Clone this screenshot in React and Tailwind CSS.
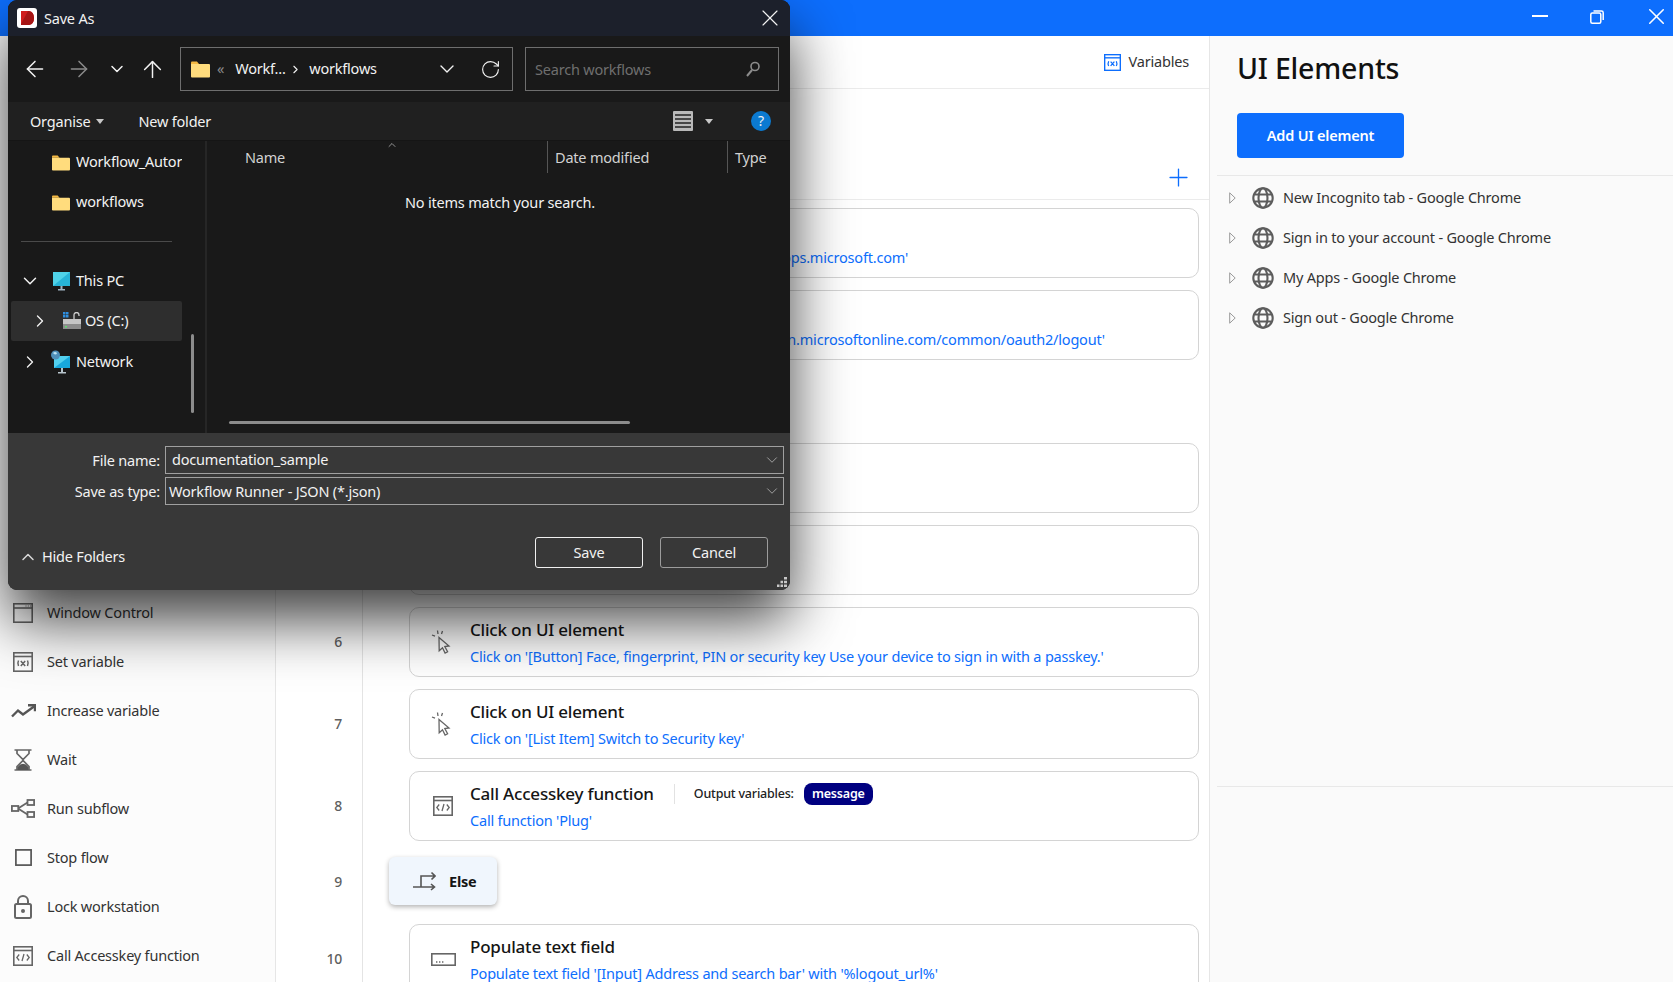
import { ArrowLeft, ArrowRight, ArrowUp, ChevronDown, ChevronRight, ChevronUp, Plus, RotateCw, X } from 'lucide-react'

const tools = [
  ['Window Control', WindowIcon, 'h-[20px] w-[20px]'],
  ['Set variable', VarIcon, 'h-[20px] w-[20px]'],
  ['Increase variable', TrendIcon, 'h-[14px] w-[25px]'],
  ['Wait', WaitIcon, 'h-[22px] w-[18px]'],
  ['Run subflow', SubflowIcon, 'h-[19px] w-[24px]'],
  ['Stop flow', StopIcon, 'h-[17px] w-[17px]'],
  ['Lock workstation', LockIcon, 'h-[24px] w-[18px]'],
  ['Call Accesskey function', CodeIcon, 'h-[20px] w-[20px]'],
]

const elements = [
  'New Incognito tab - Google Chrome',
  'Sign in to your account - Google Chrome',
  'My Apps - Google Chrome',
  'Sign out - Google Chrome',
]

function WindowIcon({ className }) {
  return (
    <svg className={className} viewBox="0 0 20 20" fill="none" stroke="#666" strokeWidth="1.600">
      <rect x=".8" y=".8" width="18.400" height="18.400" />
      <path d="M1 5h18" />
      <path d="M12.500 3h1M14.800 3h1M17 3h1" strokeWidth="1" />
    </svg>
  )
}

function VarIcon({ className, color = '#666' }) {
  return (
    <svg className={className} viewBox="0 0 20 20" fill="none" stroke={color} strokeWidth="1.600">
      <rect x=".8" y=".8" width="18.400" height="18.400" />
      <path d="M1 4.500h18" />
      <path d="M5.500 8.500q-1.300 2.700 0 5.500M14.500 8.500q1.300 2.700 0 5.500M7.800 9l4.400 5M12.200 9l-4.400 5" strokeWidth="1.500" />
    </svg>
  )
}

function CodeIcon({ className }) {
  return (
    <svg className={className} viewBox="0 0 20 20" fill="none" stroke="#666" strokeWidth="1.600">
      <rect x=".8" y=".8" width="18.400" height="18.400" />
      <path d="M1 4.500h18" />
      <path d="M6.200 8.500l-2.400 3 2.400 3M13.800 8.500l2.400 3-2.400 3M11 8l-2 7" strokeWidth="1.300" />
    </svg>
  )
}

function TrendIcon({ className }) {
  return (
    <svg className={className} viewBox="0 0 25 14" fill="none" stroke="#555" strokeWidth="2.400">
      <path d="M1 12.500l6-6 5 4 11-8" />
      <path d="M17 1.300h7v6" />
    </svg>
  )
}

function WaitIcon({ className }) {
  return (
    <svg className={className} viewBox="0 0 18 22" fill="none" stroke="#666" strokeWidth="1.700">
      <path d="M.5 1h17M.5 21h17M3 1v3.500L9 10.500l6-6V1M3 21v-3.500l6-6 6 6V21" />
      <path d="M3.500 21v-3q5.500-6.500 11 0v3z" fill="#555" stroke="none" />
    </svg>
  )
}

function SubflowIcon({ className }) {
  return (
    <svg className={className} viewBox="0 0 24 19" fill="none" stroke="#666" strokeWidth="1.800">
      <rect x=".9" y="7" width="6.400" height="5" />
      <rect x="16.500" y="1" width="6.600" height="5" />
      <rect x="16.500" y="13" width="6.600" height="5" />
      <path d="M7 9.500L16.500 3.500M7 9.500l9.500 6" />
    </svg>
  )
}

function StopIcon({ className }) {
  return (
    <svg className={className} viewBox="0 0 17 17" fill="none" stroke="#555" strokeWidth="1.700">
      <rect x=".9" y=".9" width="15.200" height="15.200" />
    </svg>
  )
}

function LockIcon({ className }) {
  return (
    <svg className={className} viewBox="0 0 18 24" fill="none" stroke="#666" strokeWidth="2">
      <rect x="1" y="9" width="16" height="14" rx="1.500" />
      <path d="M4 9V6a5 5 0 0 1 10 0v3" />
      <circle cx="9" cy="16" r="2" fill="#666" stroke="none" />
    </svg>
  )
}

function ClickIcon({ className }) {
  return (
    <svg className={className} viewBox="0 0 20 26" fill="none" stroke="#666" strokeWidth="1.300">
      <path d="M8 8.500l10 8.500-4.200.6 2.800 5.200-2.500 1.300-2.600-5.300-3.300 3z" />
      <path d="M6.500 1.500l.5 3.500M11.500 2l-1 3M1 6l3 1.200" />
    </svg>
  )
}

function ElseIcon({ className }) {
  return (
    <svg className={className} viewBox="0 0 23 21" fill="none" stroke="#555" strokeWidth="1.600">
      <path d="M0 16h21M18 13l3.500 3-3.500 3" />
      <path d="M8 16V5h14M18.500 1.500L22 5l-3.500 3.500" />
    </svg>
  )
}

function InputIcon({ className }) {
  return (
    <svg className={className} viewBox="0 0 25 13" fill="none" stroke="#666" strokeWidth="1.600">
      <rect x=".8" y=".8" width="23.400" height="11.400" />
      <path d="M5 9h1.400M8 9h1.400M11 9h1.400" />
    </svg>
  )
}

function GlobeIcon({ className }) {
  return (
    <svg className={className} viewBox="0 0 22 22" fill="none" stroke="#5c5c5c" strokeWidth="2.100">
      <circle cx="11" cy="11" r="9.700" />
      <ellipse cx="11" cy="11" rx="4.500" ry="9.700" />
      <path d="M2.200 7.500h17.600M2.200 14.500h17.600" />
    </svg>
  )
}

function FolderIcon({ className }) {
  return (
    <svg className={className} viewBox="0 0 19 19">
      <path d="M0 3q0-1 1-1h5l2 2.500H0z" fill="#f5b942" />
      <path d="M0 4.500h18q1 0 1 1V17q0 1-1 1H1q-1 0-1-1z" fill="#ffdc7d" />
    </svg>
  )
}

function AppLogo() {
  return (
    <svg className="h-5 w-5" viewBox="0 0 20 20">
      <rect width="20" height="20" rx="3" fill="#fff" />
      <path d="M4 3h8q5 1 5 7t-5 7H4z" fill="#d01c1c" />
      <path d="M4 16L11 3h1q5 1 5 7t-5 7H4z" fill="#a51414" />
    </svg>
  )
}

function PcIcon() {
  return (
    <svg className="h-[19px] w-[19px]" viewBox="0 0 19 19">
      <rect x="1" y="0" width="17" height="14" fill="#27b4d8" />
      <path d="M1 0h17L1 14z" fill="#4fd2e8" />
      <path d="M6 17h7v1.500H6zM8.500 14h2v3h-2z" fill="#9fb4c4" />
    </svg>
  )
}

function DriveIcon() {
  return (
    <svg className="h-[19px] w-5" viewBox="0 0 20 19">
      <path d="M1 0h2.500v2.500H1zM4 0h2.500v2.500H4zM1 3h2.500v2.500H1zM4 3h2.500v2.500H4z" fill="#2f8fe0" />
      <path d="M12 7V3a2.500 2.500 0 0 1 5 0v1" fill="none" stroke="#cfcfcf" strokeWidth="1.300" />
      <rect x="1" y="7" width="18" height="5" fill="#c6c6c6" />
      <rect x="1" y="12" width="18" height="5" fill="#8d8d8d" />
      <path d="M3 14h2v1.500H3z" fill="#5ce06f" />
    </svg>
  )
}

function NetworkIcon() {
  return (
    <svg className="h-6 w-[21px]" viewBox="0 0 21 24">
      <rect x="4" y="6" width="16" height="12" fill="#18a8dc" />
      <path d="M4 6h16L4 18z" fill="#52d0ee" />
      <circle cx="5.500" cy="5" r="4.500" fill="#4f8fb8" />
      <path d="M3 3q2-2 4 0-1 3-4 0z" fill="#bfe4f4" />
      <path d="M11 18h2v4h-2zM8 22h8v1.500H8z" fill="#b7c4cc" />
    </svg>
  )
}

function Card({ icon, title, sub, extra }) {
  return (
    <div className="flex h-[70px] items-center rounded-[10px] border border-[#d4d4d4] bg-white">
      <div className="flex w-[60px] shrink-0 justify-center pl-[2px]">{icon}</div>
      <div className="min-w-0 flex-1">
        <div className="flex items-center">
          <span className="text-[17px] leading-[26px] font-medium text-[#151515]">{title}</span>
          {extra}
        </div>
        <div className="mt-[3px] truncate leading-[21px] text-[#0d6efd]">{sub}</div>
      </div>
    </div>
  )
}

function Step({ n, children, tall }) {
  return (
    <div className={`flex ${tall ? 'h-[71px]' : 'h-[82px]'}`}>
      <div className="flex w-[87px] shrink-0 items-center justify-end border-r border-[#e4e4e4] pr-[20px] pb-[2px] text-[14px] font-medium text-[#5f5f5f]">{n}</div>
      <div className="flex-1 pt-[6px] pr-[10px] pl-[46px]">{children}</div>
    </div>
  )
}

function BranchTag({ label }) {
  return (
    <div className="-ml-[20px] mt-[4px] flex h-[48px] w-[108px] items-center rounded-[6px] bg-[#f0f6fd] pl-[24px] shadow-[0_2px_5px_rgba(0,0,0,0.3)]">
      <ElseIcon className="h-[21px] w-[23px]" />
      <span className="ml-[13px] pt-[2px] font-bold text-[#151515]">{label}</span>
    </div>
  )
}

function SaveDialog() {
  return (
    <div className="absolute top-0 left-[8px] flex h-[590px] w-[782px] flex-col overflow-hidden rounded-[9px] bg-[#191919] text-[#f2f2f2] shadow-[0_30px_60px_rgba(0,0,0,0.75)]">
      <div className="flex h-[36px] shrink-0 items-center bg-[#1c202b] pl-[9px]">
        <AppLogo />
        <span className="ml-[7px] pt-px text-[14.500px]">Save As</span>
        <X className="mr-[6px] ml-auto h-[28px] w-[28px]" strokeWidth={1} />
      </div>

      <div className="flex h-[66px] shrink-0 items-center pl-[14px]">
        <ArrowLeft className="h-[26px] w-[26px] shrink-0" strokeWidth={1.400} />
        <ArrowRight className="ml-[18px] h-[26px] w-[26px] shrink-0 text-[#8a8a8a]" strokeWidth={1.400} />
        <ChevronDown className="ml-[15px] h-[20px] w-[20px] shrink-0" strokeWidth={1.800} />
        <ArrowUp className="ml-[12px] h-[27px] w-[27px] shrink-0" strokeWidth={1.300} />
        <div className="ml-[14px] flex h-[44px] w-[333px] shrink-0 items-center border border-[#6e6e6e] pl-[10px]">
          <FolderIcon className="h-[20px] w-[19px]" />
          <span className="ml-[7px] text-[#8a8a8a]">«</span>
          <span className="ml-[11px] w-[50px] whitespace-nowrap">Workf...</span>
          <ChevronRight className="ml-[4px] h-[13px] w-[13px]" strokeWidth={2} />
          <span className="ml-[7px]">workflows</span>
          <ChevronDown className="ml-auto h-[24px] w-[24px]" strokeWidth={1.400} />
          <RotateCw className="mr-[11px] ml-[21px] h-[21px] w-[21px]" strokeWidth={1.300} />
        </div>
        <div className="ml-[12px] flex h-[44px] w-[254px] shrink-0 items-center justify-between border border-[#6e6e6e] pr-[17px] pl-[9px] text-[#6f6f6f]">
          <span className="pt-px">Search workflows</span>
          <svg className="h-[16px] w-[16px]" viewBox="0 0 16 16" fill="none" stroke="#8c8c8c" strokeWidth="1.600">
            <circle cx="10" cy="5.500" r="4" />
            <path d="M7 9l-5 6" strokeWidth="2" />
          </svg>
        </div>
      </div>

      <div className="flex h-[38px] shrink-0 items-center bg-[#202020] pl-[22px]">
        <span className="pt-px">Organise</span>
        <span className="ml-[6px] h-0 w-0 border-x-[4px] border-t-[5px] border-x-transparent border-t-[#c8c8c8]" />
        <span className="ml-[34px] pt-px">New folder</span>
        <svg className="ml-auto h-[20px] w-[20px]" viewBox="0 0 20 20">
          <rect width="20" height="20" rx="1" fill="#b9b9b9" />
          <path d="M2 4h16M2 8h16M2 12h16M2 16h16" stroke="#222" strokeWidth="1.400" />
        </svg>
        <span className="ml-[12px] h-0 w-0 border-x-[4px] border-t-[5px] border-x-transparent border-t-[#c8c8c8]" />
        <span className="mr-[19px] ml-[38px] flex h-[20px] w-[20px] items-center justify-center rounded-full bg-[#0b7ad1] text-[14px] leading-none">?</span>
      </div>

      <div className="flex min-h-0 flex-1 border-t border-[#151515]">
        <div className="relative w-[197px] shrink-0 pt-px pl-[3px]">
          <div className="flex h-[40px] w-[171px] items-center overflow-hidden pl-[41px] whitespace-nowrap">
            <FolderIcon className="h-[19px] w-[18px] shrink-0" />
            <span className="ml-[6px]">Workflow_Autor</span>
          </div>
          <div className="flex h-[40px] w-[171px] items-center pl-[41px]">
            <FolderIcon className="h-[19px] w-[18px] shrink-0" />
            <span className="ml-[6px]">workflows</span>
          </div>
          <div className="mt-[19px] mb-[19px] ml-[10px] h-px w-[151px] bg-[#4a4a4a]" />
          <div className="flex h-[40px] w-[171px] items-center pl-[8px]">
            <ChevronDown className="h-[22px] w-[22px]" strokeWidth={1.600} />
            <span className="ml-[11px]"><PcIcon /></span>
            <span className="ml-[5px]">This PC</span>
          </div>
          <div className="flex h-[40px] w-[171px] items-center rounded-[2px] bg-[#2e2e2e] pl-[19px]">
            <ChevronRight className="h-[20px] w-[20px]" strokeWidth={1.600} />
            <span className="ml-[12px]"><DriveIcon /></span>
            <span className="ml-[3px]">OS (C:)</span>
          </div>
          <div className="flex h-[41px] w-[171px] items-center pl-[9px]">
            <ChevronRight className="h-[20px] w-[20px]" strokeWidth={1.600} />
            <span className="ml-[10px]"><NetworkIcon /></span>
            <span className="ml-[5px]">Network</span>
          </div>
          <div className="absolute top-[193px] left-[183px] h-[79px] w-[3px] rounded-full bg-[#8c8c8c]" />
        </div>
        <div className="flex min-w-0 flex-1 flex-col border-l-2 border-[#262626]">
          <div className="relative flex h-[32px] shrink-0 items-center text-[#d2d2d2]">
            <span className="w-[340px] pt-px pl-[38px]">Name</span>
            <span className="h-full w-[180px] border-l border-[#555] pt-[6px] pl-[7px]">Date modified</span>
            <span className="h-full border-l border-[#555] pt-[6px] pl-[7px]">Type</span>
            <ChevronUp className="absolute top-[-2px] left-[179px] h-[12px] w-[12px] text-[#bbb]" strokeWidth={1.500} />
          </div>
          <div className="mt-[19px] pl-[198px]">No items match your search.</div>
          <div className="mt-auto mb-[9px] ml-[22px] h-[3px] w-[401px] rounded-full bg-[#8c8c8c]" />
        </div>
      </div>

      <div className="relative h-[157px] shrink-0 bg-[#383838] pt-[13px]">
        <div className="flex h-[28px] items-center">
          <span className="w-[152px] pt-px text-right">File name:</span>
          <div className="ml-[5px] flex h-full w-[619px] items-center justify-between border border-[#a0a0a0] pr-[2px] pl-[6px]">
            <span>documentation_sample</span>
            <ChevronDown className="h-[18px] w-[18px] text-[#c0c0c0]" strokeWidth={1} />
          </div>
        </div>
        <div className="mt-[3px] flex h-[28px] items-center">
          <span className="w-[152px] pt-px text-right">Save as type:</span>
          <div className="ml-[5px] flex h-full w-[619px] items-center justify-between border border-[#a0a0a0] pr-[2px] pl-[3px]">
            <span className="pt-px">Workflow Runner - JSON (*.json)</span>
            <ChevronDown className="h-[18px] w-[18px] text-[#c0c0c0]" strokeWidth={1} />
          </div>
        </div>
        <div className="mt-[32px] flex items-start pr-[22px] pl-[10px]">
          <div className="flex items-center pt-[9px]">
            <ChevronUp className="h-[20px] w-[20px] text-[#d8d8d8]" strokeWidth={1.800} />
            <span className="ml-[4px]">Hide Folders</span>
          </div>
          <button className="ml-auto h-[31px] w-[108px] rounded-[3px] border-[1.500px] border-[#f0f0f0]" type="button">Save</button>
          <button className="ml-[17px] h-[31px] w-[108px] rounded-[3px] border border-[#9c9c9c]" type="button">Cancel</button>
        </div>
        <svg className="absolute right-[3px] bottom-[3px] h-[10px] w-[10px]" viewBox="0 0 10 10" fill="#c8c8c8">
          <path d="M7 0h3v2.500H7zM3.500 3.700h2.500v2.500H3.500zM7 3.700h3v2.500H7zM0 7.500h2.500V10H0zM3.500 7.500h2.500V10H3.500zM7 7.500h3V10H7z" />
        </svg>
      </div>
    </div>
  )
}

export default function App() {
  return (
    <div className="relative flex h-[982px] w-[1673px] flex-col overflow-hidden bg-white font-['Noto_Sans',sans-serif] text-[14.500px] tracking-[-0.2px]">
      <div className="flex h-[36px] shrink-0 items-center justify-end bg-[#0d6efd] text-white">
        <span className="mr-[42px] mb-[4px] h-[2px] w-[16px] bg-white" />
        <svg className="mr-[39px] mb-[2px] h-[14px] w-[14px]" viewBox="0 0 14 14" fill="none" stroke="#fff" strokeWidth="1.500">
          <rect x=".8" y="3" width="10" height="10.200" rx="1.500" />
          <path d="M3.500 1h8q1.700 0 1.700 1.700V10" />
        </svg>
        <X className="mr-[3px] mb-[4px] h-[27px] w-[27px]" strokeWidth={1.400} />
      </div>

      <div className="flex min-h-0 flex-1">
        <div className="w-[276px] shrink-0 overflow-hidden border-r border-[#e6e6e6] bg-[#fcfcfc] pt-[552px] text-[#333]">
          {tools.map(([label, Icon, size]) => (
            <div className="flex h-[49px] items-center" key={label}>
              <div className="flex w-[47px] shrink-0 justify-center pr-[1px]">
                <Icon className={size} />
              </div>
              <span>{label}</span>
            </div>
          ))}
        </div>

        <div className="flex w-[934px] shrink-0 flex-col overflow-hidden border-r border-[#e6e6e6]">
          <div className="flex h-[53px] shrink-0 items-center justify-end border-b border-[#ebebeb] pr-[20px] text-[#333]">
            <VarIcon className="h-[17px] w-[17px]" color="#0d6efd" />
            <span className="ml-[8px]">Variables</span>
          </div>
          <div className="flex h-[111px] shrink-0 items-end justify-end border-b border-[#ebebeb] pr-[16px] pb-[7px]">
            <Plus className="h-[29px] w-[29px] text-[#0d6efd]" strokeWidth={1.100} />
          </div>
          <div className="pt-[2px]">
            <Step n="1"><Card icon={<VarIcon className="h-[20px] w-[20px]" />} title="Launch new Chrome" sub="Launch Chrome in incognito, go to 'https://myapps.microsoft.com'" /></Step>
            <Step n="2"><Card icon={<VarIcon className="h-[20px] w-[20px]" />} title="Launch new Chrome" sub="Launch Chrome incognito and go to 'https://login.microsoftonline.com/common/oauth2/logout'" /></Step>
            <Step n="3" tall><BranchTag label="If" /></Step>
            <Step n="4"><Card icon={<ClickIcon className="h-[26px] w-[20px]" />} title="Click on UI element" sub="Click on '[Button] Sign in'" /></Step>
            <Step n="5"><Card icon={<ClickIcon className="h-[26px] w-[20px]" />} title="Click on UI element" sub="Click on '[Button] Next'" /></Step>
            <Step n="6"><Card icon={<ClickIcon className="h-[26px] w-[20px]" />} title="Click on UI element" sub="Click on '[Button] Face, fingerprint, PIN or security key Use your device to sign in with a passkey.'" /></Step>
            <Step n="7"><Card icon={<ClickIcon className="h-[26px] w-[20px]" />} title="Click on UI element" sub="Click on '[List Item] Switch to Security key'" /></Step>
            <Step n="8">
              <Card
                icon={<CodeIcon className="ml-[4px] h-[20px] w-[20px]" />}
                title="Call Accesskey function"
                sub="Call function 'Plug'"
                extra={(
                  <div className="ml-[20px] flex items-center">
                    <span className="h-[20px] w-px bg-[#e2e2e2]" />
                    <span className="ml-[19px] text-[12.500px] font-medium text-[#222]">Output variables:</span>
                    <span className="ml-[10px] flex h-[22px] w-[69px] items-center justify-center rounded-[8px] bg-[#000080] text-[12.500px] font-semibold text-white">message</span>
                  </div>
                )}
              />
            </Step>
            <Step n="9" tall><BranchTag label="Else" /></Step>
            <Step n="10"><Card icon={<InputIcon className="ml-[4px] h-[13px] w-[25px]" />} title="Populate text field" sub="Populate text field '[Input] Address and search bar' with '%logout_url%'" /></Step>
          </div>
        </div>

        <div className="min-w-0 flex-1 bg-[#fafafa]">
          <div className="pl-[27px]">
            <h1 className="pt-[12px] text-[28.500px] leading-[40px] font-medium text-[#111]">UI Elements</h1>
            <button className="mt-[25px] h-[45px] w-[167px] rounded-[4px] bg-[#0d6efd] font-semibold text-white" type="button">Add UI element</button>
          </div>
          <div className="mt-[17px] ml-[7px] border-t border-[#e8e8e8] pt-[2px]">
            {elements.map((name) => (
              <div className="flex h-[40px] items-center pl-[12px] text-[#333]" key={name}>
                <svg className="h-[12px] w-[7px]" viewBox="0 0 7 12" fill="none" stroke="#999" strokeWidth="1">
                  <path d="M.7.800l5.500 5.200-5.500 5.200z" />
                </svg>
                <GlobeIcon className="ml-[16px] h-[22px] w-[22px]" />
                <span className="ml-[9px]">{name}</span>
              </div>
            ))}
            <div className="mt-[448px] border-t border-[#e8e8e8]" />
          </div>
        </div>
      </div>

      <SaveDialog />
    </div>
  )
}
